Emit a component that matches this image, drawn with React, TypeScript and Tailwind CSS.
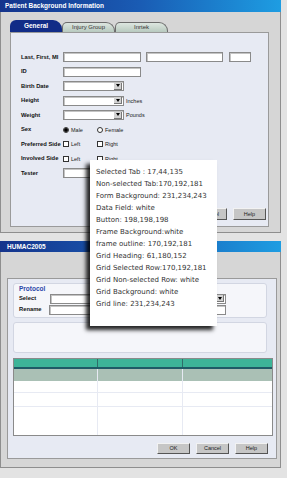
import React from 'react'

const inputCls =
  'h-[10px] bg-white border border-[#8a8a8a] shadow-[inset_1px_1px_0_#c4c4c4]'

function Select({ w }: { w: string }) {
  return (
    <div className={`${inputCls} ${w} flex justify-end items-center pr-[1px]`}>
      <div className="w-[8px] h-[7px] bg-[#d2d2d2] border-r border-b border-[#777] flex items-center justify-center">
        <div className="w-0 h-0 border-l-[2.5px] border-r-[2.5px] border-t-[3px] border-l-transparent border-r-transparent border-t-black" />
      </div>
    </div>
  )
}

function Btn({ label, h = 'h-[12px]' }: { label: string; h?: string }) {
  return (
    <div
      className={`w-[33px] ${h} bg-[#c6c6c6] border-t border-l border-[#f2f2f2] border-r-[1.5px] border-b-[1.5px] border-r-[#555] border-b-[#555] flex items-center justify-center text-[5.5px] text-[#222]`}
    >
      {label}
    </div>
  )
}

function Row({ label, children }: { label: string; children?: React.ReactNode }) {
  return (
    <div className="h-[14.5px] flex items-center">
      <div className="w-[42px] font-bold text-[5.8px] text-[#111] whitespace-nowrap">{label}</div>
      <div className="flex items-center">{children}</div>
    </div>
  )
}

function Check({ label }: { label: string }) {
  return (
    <div className="flex items-center w-[34px] gap-[2px]">
      <div className="w-[6px] h-[6px] bg-white border border-[#333]" />
      <span className="text-[5.5px] text-[#222]">{label}</span>
    </div>
  )
}

const tips = [
  'Selected Tab : 17,44,135',
  'Non-selected Tab:170,192,181',
  'Form Background: 231,234,243',
  'Data Field: white',
  'Button: 198,198,198',
  'Frame Background:white',
  'frame outline: 170,192,181',
  'Grid Heading: 61,180,152',
  'Grid Selected Row:170,192,181',
  'Grid Non-selected Row: white',
  'Grid Background: white',
  'Grid line: 231,234,243',
]

export default function App() {
  return (
    <div className="relative w-[287px] h-[478px] overflow-hidden bg-[#e3e3e3] font-['Liberation_Sans',Arial,sans-serif]">
      {/* Patient window */}
      <div className="w-[281px]">
        <div className="h-[12px] bg-gradient-to-r from-[#15348c] via-[#1a5cb4] to-[#1e9de2] flex items-center pl-[5px] text-white font-bold text-[6.5px]">
          Patient Background Information
        </div>
        <div className="h-[221px] bg-[#d6d6d6] border-l border-r border-b border-[#8e8e8e] pl-[9px] pt-[8px]">
          {/* tabs */}
          <div className="h-[12px] flex items-end">
            <div className="w-[52px] h-[12px] bg-[#112c87] rounded-tl-[6px] rounded-tr-[9px] flex items-center justify-center text-white font-bold text-[6.5px]">
              General
            </div>
            <div className="w-[53px] h-[10px] bg-gradient-to-b from-[#dde6e0] to-[#b8cabf] border border-b-0 border-[#6c6c6c] rounded-tl-[5px] rounded-tr-[9px] flex items-center justify-center text-[#333] text-[6px]">
              Injury Group
            </div>
            <div className="w-[53px] h-[10px] bg-gradient-to-b from-[#dde6e0] to-[#b8cabf] border border-b-0 border-[#6c6c6c] rounded-tl-[5px] rounded-tr-[9px] flex items-center justify-center text-[#333] text-[6px]">
              Inrtek
            </div>
          </div>
          {/* form */}
          <div className="w-[259px] h-[195px] bg-[#e7eaf3] border border-[#9a9a9a] flex flex-col pl-[10px] pt-[17px] pb-[6px] pr-[1px]">
            <Row label="Last, First, MI">
              <div className={`${inputCls} w-[78px]`} />
              <div className={`${inputCls} w-[77px] ml-[5px]`} />
              <div className={`${inputCls} w-[22px] ml-[6px]`} />
            </Row>
            <Row label="ID">
              <div className={`${inputCls} w-[78px]`} />
            </Row>
            <Row label="Birth Date">
              <Select w="w-[61px]" />
            </Row>
            <Row label="Height">
              <Select w="w-[61px]" />
              <span className="ml-[2px] text-[5.5px] text-[#222]">Inches</span>
            </Row>
            <Row label="Weight">
              <Select w="w-[61px]" />
              <span className="ml-[2px] text-[5.5px] text-[#222]">Pounds</span>
            </Row>
            <Row label="Sex">
              <div className="flex items-center w-[34px] gap-[2px]">
                <div className="w-[6px] h-[6px] rounded-full border border-[#333] bg-white flex items-center justify-center">
                  <div className="w-[4px] h-[4px] rounded-full bg-black" />
                </div>
                <span className="text-[5.5px] text-[#222]">Male</span>
              </div>
              <div className="flex items-center gap-[2px]">
                <div className="w-[6px] h-[6px] rounded-full border border-[#333] bg-white" />
                <span className="text-[5.5px] text-[#222]">Female</span>
              </div>
            </Row>
            <Row label="Preferred Side">
              <Check label="Left" />
              <Check label="Right" />
            </Row>
            <Row label="Involved Side">
              <Check label="Left" />
              <Check label="Right" />
            </Row>
            <Row label="Tester">
              <div className={`${inputCls} w-[78px]`} />
            </Row>
            <div className="mt-auto flex justify-end gap-[6px] pr-[1px]">
              <Btn label="OK" />
              <Btn label="Cancel" />
              <Btn label="Help" />
            </div>
          </div>
        </div>
      </div>

      {/* HUMAC window */}
      <div className="w-[281px] mt-[8px]">
        <div className="h-[11px] bg-gradient-to-r from-[#15348c] via-[#1a5cb4] to-[#1e9de2] flex items-center pl-[7px] text-white font-bold text-[6.5px]">
          HUMAC2005
        </div>
        <div className="h-[216px] bg-[#d6d6d6] border-l border-r border-b border-[#8e8e8e] pl-[6px] pt-[26px]">
          <div className="w-[270px] h-[181px] bg-[#e7eaf3] border border-[#9a9a9a] flex flex-col pl-[5px] pt-[4px] pr-[2px] pb-[4px]">
            {/* protocol group */}
            <div className="w-[254px] h-[35px] bg-[#f5f6fa] border border-[#d2d6e2] rounded-[3px] pl-[5px] pt-[1px]">
              <div className="text-[6.5px] font-bold text-[#2a47a8] leading-[8px]">Protocol</div>
              <div className="flex items-center h-[11px]">
                <div className="w-[31px] text-[5.8px] font-bold text-[#111]">Select</div>
                <Select w="w-[176px]" />
              </div>
              <div className="flex items-center h-[11px]">
                <div className="w-[30px] text-[5.8px] font-bold text-[#111]">Rename</div>
                <div className={`${inputCls} w-[177px]`} />
              </div>
            </div>
            <div className="w-[254px] h-[31px] mt-[4px] bg-[#f5f6fa] border border-[#d2d6e2] rounded-[3px]" />
            {/* grid */}
            <div className="w-[260px] h-[78px] mt-[5px] bg-white border border-[#8a8a8a] flex flex-col">
              <div className="h-[10px] bg-[#3db498] border-b-2 border-[#1f5a66] flex">
                <div className="w-[84px] border-r border-[#2e6e6a]" />
                <div className="w-[85px] border-r border-[#2e6e6a]" />
                <div className="flex-1" />
              </div>
              <div className="flex-1 relative">
                <div className="h-[12px] bg-[#aac0b5]" />
                <div className="h-[12px] border-b border-[#e7eaf3]" />
                <div className="h-[14px] border-b border-[#e7eaf3]" />
                <div className="absolute inset-0 flex pointer-events-none">
                  <div className="w-[84px] border-r border-[#e7eaf3]" />
                  <div className="w-[85px] border-r border-[#e7eaf3]" />
                </div>
              </div>
            </div>
            <div className="mt-auto flex justify-end gap-[6px] pr-[6px]">
              <Btn label="OK" h="h-[11px]" />
              <Btn label="Cancel" h="h-[11px]" />
              <Btn label="Help" h="h-[11px]" />
            </div>
          </div>
        </div>
      </div>

      {/* colour legend tooltip */}
      <div className="absolute left-[90px] top-[160px] w-[127px] h-[166px] bg-white pl-[6px] pt-[6px] shadow-[-4px_4px_4px_rgba(0,0,0,0.85)] font-['DejaVu_Sans',Verdana,sans-serif] text-[7px] leading-[12px] text-[#333]">
        {tips.map((t) => (
          <div key={t} className="whitespace-nowrap">
            {t}
          </div>
        ))}
      </div>
    </div>
  )
}
